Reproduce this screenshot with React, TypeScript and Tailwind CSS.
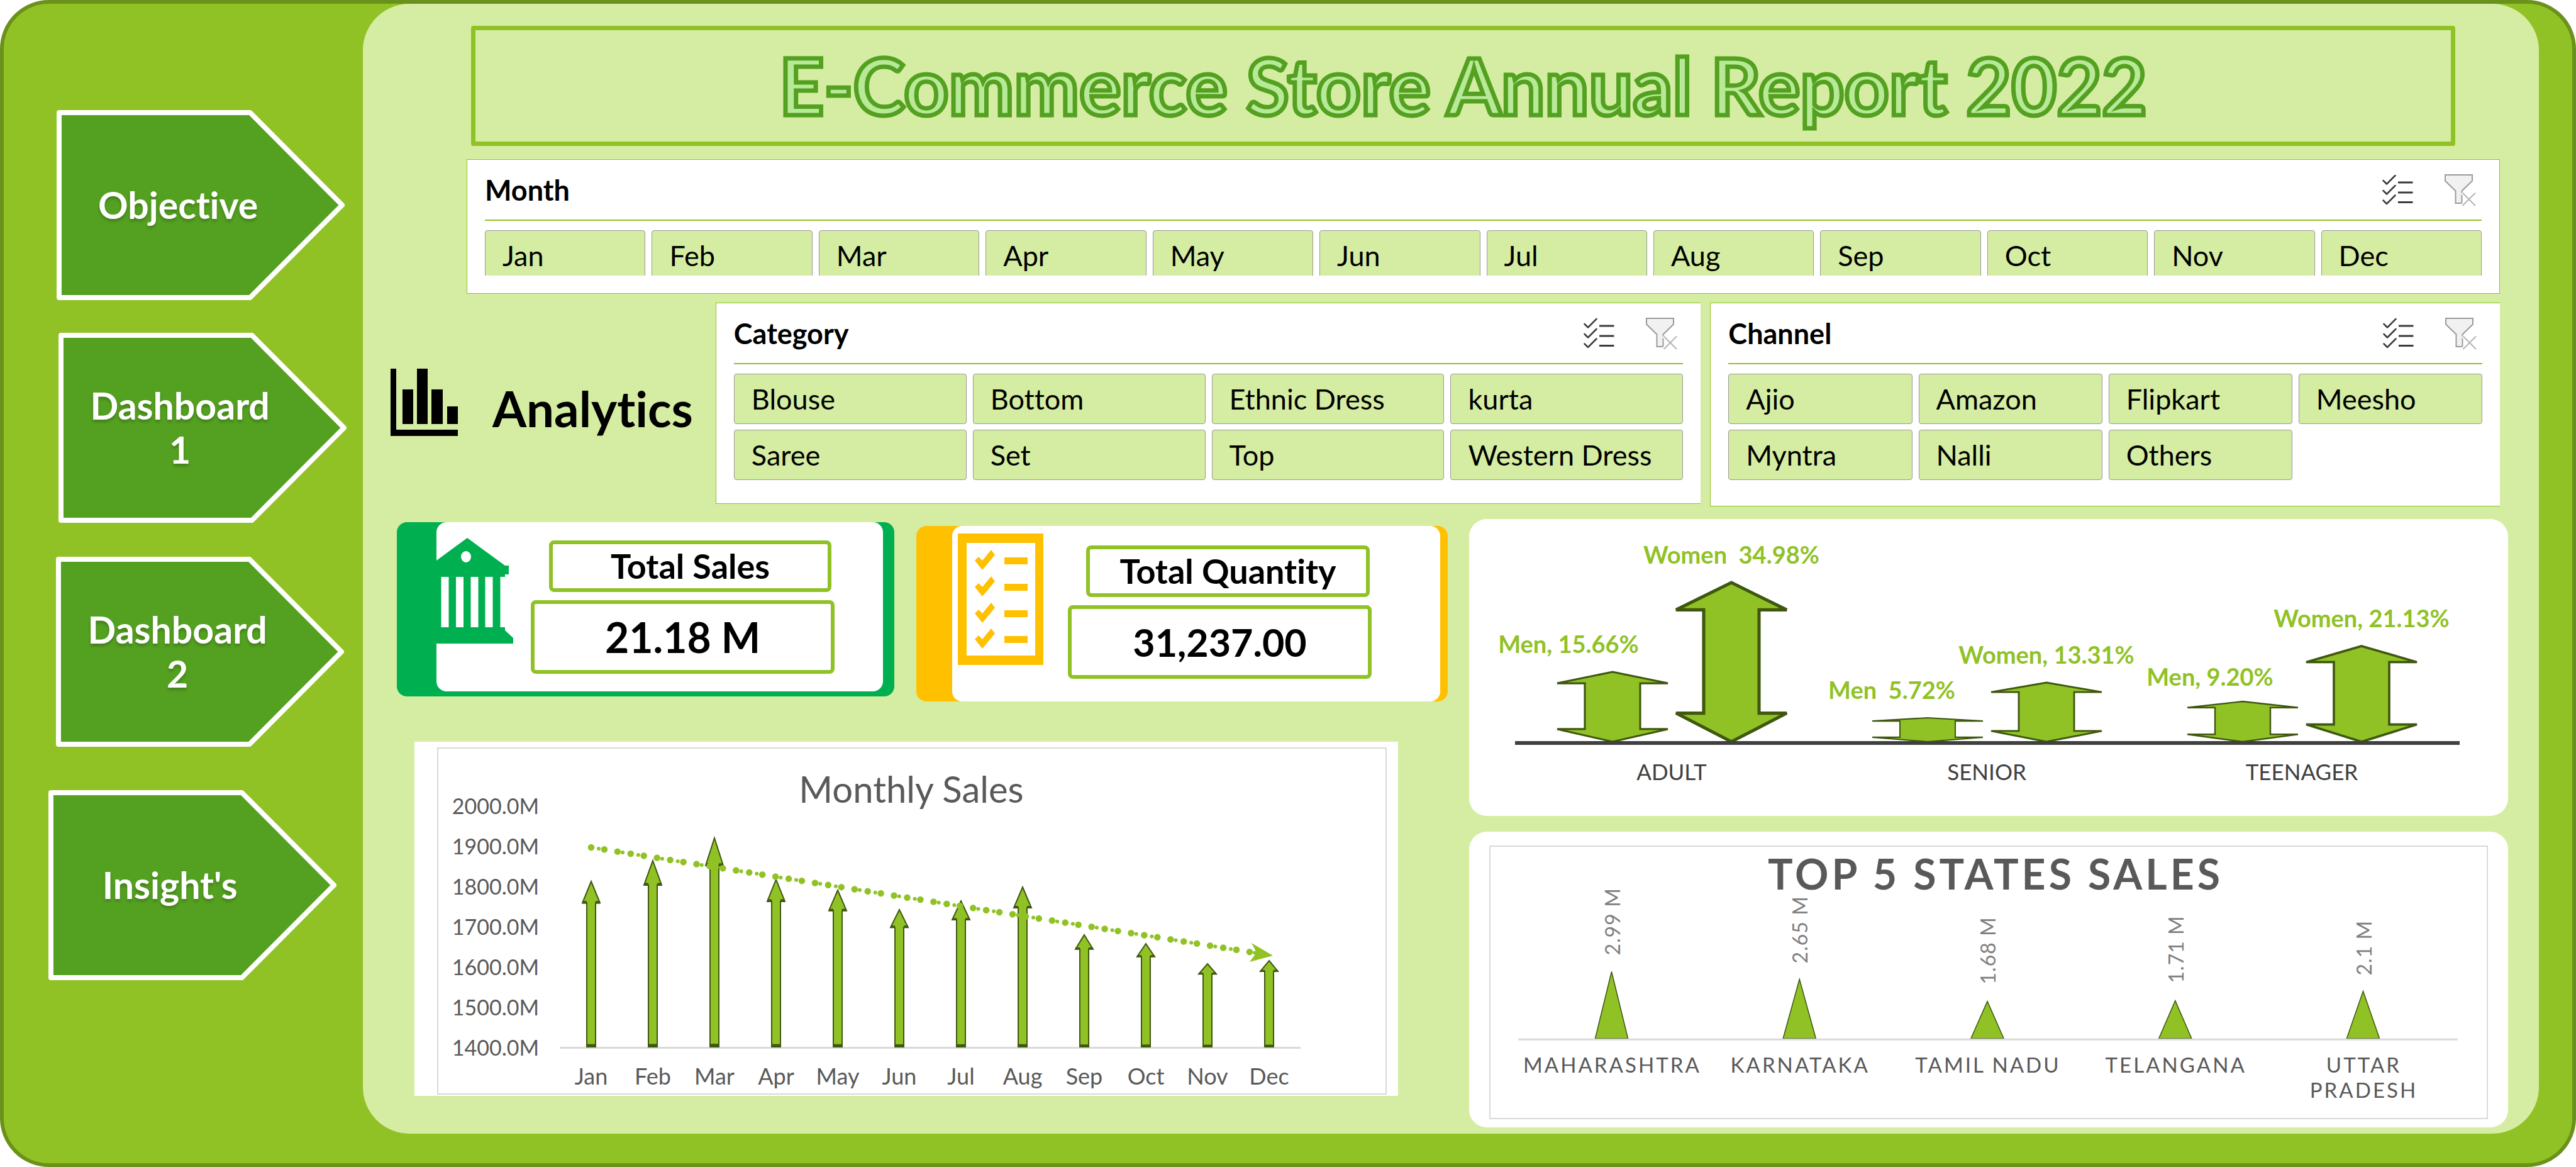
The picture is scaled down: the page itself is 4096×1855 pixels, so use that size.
import React from "react";

const navItems = [
  { label: "Objective", cls: "mt-[169px] ml-[13px]" },
  { label: "Dashboard 1", cls: "mt-[52px] ml-4" },
  { label: "Dashboard 2", cls: "mt-[54px] ml-3" },
  { label: "Insight's", cls: "mt-[69px]" },
];

const months = ["Jan", "Feb", "Mar", "Apr", "May", "Jun", "Jul", "Aug", "Sep", "Oct", "Nov", "Dec"];
const categories = ["Blouse", "Bottom", "Ethnic Dress", "kurta", "Saree", "Set", "Top", "Western Dress"];
const channels = ["Ajio", "Amazon", "Flipkart", "Meesho", "Myntra", "Nalli", "Others"];

function NavArrow({ label, cls }: { label: string; cls: string }) {
  return (
    <a href="#" className={`relative flex h-[302px] w-[92%] items-center ${cls}`}>
      <svg
        className="absolute inset-0 h-full w-full"
        viewBox="0 0 462 303"
        preserveAspectRatio="none"
        aria-hidden="true"
      >
        <path
          d="M4 4H309L456 151.500L309 299H4Z"
          fill="#54a021"
          stroke="#ffffff"
          strokeWidth="8"
          strokeLinejoin="round"
        />
      </svg>
      <span className="relative w-[84%] px-10 text-center text-[59px] leading-[70px] font-bold text-white [text-shadow:0_4px_4px_rgba(0,0,0,0.2)]">
        {label}
      </span>
    </a>
  );
}

function MultiSelectIcon() {
  return (
    <svg className="h-[50px] w-[50px]" viewBox="0 0 50 50" fill="none" aria-hidden="true">
      <g stroke="#3b3b3b" strokeWidth="2.500" strokeLinecap="round" strokeLinejoin="round">
        <path d="M1.500 10L7 15.500L20.500 2" />
        <path d="M1.500 26L7 31.500L20.500 18" />
        <path d="M1.500 41.500L7 47L20.500 33.500" />
      </g>
      <path d="M25 13H48.500M25 29H48.500M25 44.500H48.500" stroke="#3b3b3b" strokeWidth="3" />
    </svg>
  );
}

function ClearFilterIcon() {
  return (
    <svg className="h-[52px] w-[52px]" viewBox="0 0 52 52" fill="none" aria-hidden="true">
      <path
        d="M2 2H45V11.500L28.500 27.500V47H18.500V27.500L2 11.500Z"
        fill="#f1f1f1"
        stroke="#9b9b9b"
        strokeWidth="2"
      />
      <path d="M29 30L50 51M50 30L29 51" stroke="#ffffff" strokeWidth="6" />
      <path d="M29.500 30.500L50 51M50 30.500L29.500 51" stroke="#b5b5b5" strokeWidth="2" />
    </svg>
  );
}

function Slicer({
  title,
  className,
  children,
}: {
  title: string;
  className: string;
  children: React.ReactNode;
}) {
  return (
    <section className={`border border-[#90c226] bg-white px-7 ${className}`}>
      <header className="flex h-[97px] items-center gap-12 border-b-2 border-[#90c226]">
        <h2 className="flex-1 text-[45px] leading-[54px] font-bold text-black">{title}</h2>
        <button type="button" aria-label={`Multi-select ${title}`}>
          <MultiSelectIcon />
        </button>
        <button type="button" aria-label={`Clear ${title} filter`} className="mr-2">
          <ClearFilterIcon />
        </button>
      </header>
      {children}
    </section>
  );
}

function SlicerButton({ label }: { label: string }) {
  return (
    <button
      type="button"
      className="h-20 rounded-[4px] border border-[#999999] bg-[#d5eda2] pl-[27px] text-left text-[45px] leading-[54px] whitespace-nowrap text-black"
    >
      {label}
    </button>
  );
}

function BankIcon() {
  return (
    <svg className="h-[168px] w-[146px]" viewBox="0 0 146 168" aria-hidden="true">
      <path
        fillRule="evenodd"
        fill="#00b050"
        d="M73 0L133 44H139V58H133V62H125.500V142H133V147L146 159V168H0V159L13 147V142H20.500V62H13V58H7V44H13ZM31.500 62V142H43.500V62ZM55 62V142H67V62ZM78.500 62V142H90.500V62ZM101.500 62V142H113.500V62ZM71 21A8 9 0 1 0 71 39A8 9 0 1 0 71 21Z"
      />
    </svg>
  );
}

function ChecklistIcon() {
  return (
    <svg className="h-[209px] w-[136px]" viewBox="0 0 136 209" aria-hidden="true">
      <rect width="136" height="209" fill="#ffc000" />
      <rect x="14" y="15" width="109" height="179" fill="#ffffff" />
      {[26, 68, 110, 151].map((y) => (
        <g key={y} transform={`translate(27 ${y})`} fill="#ffc000">
          <path d="M0 17L6 11L12 17L26 0L32 8L12 32Z" />
          <rect x="47" y="12" width="37" height="11" />
        </g>
      ))}
    </svg>
  );
}

function MonthlySalesChart() {
  const tops = [209, 176, 140, 206, 223, 254, 240, 218, 294, 308, 340, 335];
  const base = 474;
  const ticks = ["2000.0M", "1900.0M", "1800.0M", "1700.0M", "1600.0M", "1500.0M", "1400.0M"];
  const bars = tops.map((top, i) => ({ x: 243 + i * 98, top, h: base - top }));
  return (
    <svg className="block w-full" viewBox="0 0 1506 548" role="img" aria-label="Monthly Sales">
      <text x="752" y="86" textAnchor="middle" className="fill-[#595959] text-[58px]">
        Monthly Sales
      </text>
      {ticks.map((t, i) => (
        <text key={t} x="160" y={104 + i * 64} textAnchor="end" className="fill-[#595959] text-[34px]">
          {t}
        </text>
      ))}
      <path d="M193 475.500H1371" stroke="#d9d9d9" strokeWidth="3" />
      {bars.map(({ x, top, h }, i) => {
        const neck = top + h * 0.137;
        return (
          <g key={months[i]}>
            <path
              d={`M${x} ${top + 2}L${x + 14} ${neck}H${x + 7}V${base}H${x - 7}V${neck}H${x - 14}Z`}
              fill="#90c226"
              stroke="#3f570f"
              strokeWidth="2"
            />
            <path
              d={`M${x - 14} ${neck - 1}H${x - 7}M${x + 7} ${neck - 1}H${x + 14}`}
              stroke="#3f570f"
              strokeWidth={h * 0.012 + 1}
            />
            <path d={`M${x - 8} ${base - 2}H${x + 8}`} stroke="#3f570f" strokeWidth={h * 0.014 + 1} />
            <text x={x} y="534" textAnchor="middle" className="fill-[#595959] text-[36px]">
              {months[i]}
            </text>
          </g>
        );
      })}
      <g stroke="#90c226" strokeLinecap="round" fill="none">
        <path d="M243 157L1308 326" strokeWidth="10.500" strokeDasharray="0 21.200" />
        <path d="M255 159L1308 326" strokeWidth="6" strokeDasharray="0 38.600 0 25" />
      </g>
      <path d="M1293 309L1327 329L1290 339L1301 324Z" fill="#90c226" />
    </svg>
  );
}

function AgeChart() {
  const bars = [
    { x: 228, top: 241, label: "Men, 15.66%", lx: 158, ly: 213 },
    { x: 417, top: 99, label: "Women\u00a0 34.98%", lx: 417, ly: 71 },
    { x: 729, top: 314, label: "Men\u00a0 5.72%", lx: 672, ly: 286 },
    { x: 918, top: 258, label: "Women, 13.31%", lx: 918, ly: 230 },
    { x: 1230, top: 288, label: "Men, 9.20%", lx: 1178, ly: 265 },
    { x: 1419, top: 200, label: "Women, 21.13%", lx: 1419, ly: 172 },
  ];
  const base = 354;
  return (
    <svg className="block w-full" viewBox="0 0 1652 472" role="img" aria-label="Sales share by age group and gender">
      {bars.map(({ x, top, label, lx, ly }) => {
        const h = base - top;
        const n = h * 0.178;
        return (
          <g key={label}>
            <path
              d={`M${x} ${top + 2}L${x + 88} ${top + n}H${x + 44}V${base - n}H${x + 88}L${x} ${base}L${x - 88} ${base - n}H${x - 44}V${top + n}H${x - 88}Z`}
              fill="#90c226"
              stroke="#3f570f"
              strokeWidth={1.5 + h * 0.014}
            />
            <text x={lx} y={ly} textAnchor="middle" className="fill-[#90c226] text-[38px] font-bold whitespace-pre">
              {label}
            </text>
          </g>
        );
      })}
      <path d="M73 356H1575" stroke="#404040" strokeWidth="6" />
      {["ADULT", "SENIOR", "TEENAGER"].map((t, i) => (
        <text key={t} x={322 + i * 501} y="415" textAnchor="middle" className="fill-[#404040] text-[35px]">
          {t}
        </text>
      ))}
    </svg>
  );
}

function StatesChart() {
  const bars = [
    { lines: ["MAHARASHTRA"], top: 198, value: "2.99 M", vy: 172 },
    { lines: ["KARNATAKA"], top: 210, value: "2.65 M", vy: 185 },
    { lines: ["TAMIL NADU"], top: 245, value: "1.68 M", vy: 218 },
    { lines: ["TELANGANA"], top: 244, value: "1.71 M", vy: 216 },
    { lines: ["UTTAR", "PRADESH"], top: 229, value: "2.1 M", vy: 204 },
  ];
  return (
    <svg className="block w-full" viewBox="0 0 1580 430" role="img" aria-label="Top 5 states sales">
      <text x="801" y="68" textAnchor="middle" className="fill-[#595959] text-[66px] font-bold tracking-[5px]">
        TOP 5 STATES SALES
      </text>
      {bars.map(({ lines, top, value, vy }, i) => {
        const x = 192 + i * 298;
        return (
          <g key={value}>
            <path d={`M${x} ${top}L${x + 26} 304H${x - 26}Z`} fill="#90c226" stroke="#3f570f" strokeWidth="1.500" />
            <text
              transform={`translate(${x + 13} ${vy}) rotate(-90)`}
              className="fill-[#7f7f7f] text-[32px] tracking-[1px]"
            >
              {value}
            </text>
            {lines.map((line, j) => (
              <text
                key={line}
                x={x + 1}
                y={358 + j * 40}
                textAnchor="middle"
                className="fill-[#595959] text-[33px] tracking-[3px]"
              >
                {line}
              </text>
            ))}
          </g>
        );
      })}
      <path d="M44 305.500H1534" stroke="#d9d9d9" strokeWidth="3" />
    </svg>
  );
}

export default function App() {
  return (
    <div className="grid min-h-screen grid-cols-[571fr_3460fr_53fr] rounded-[78px] border-[6px] border-[#6a911b] bg-[#90c226] pb-[47px] font-['Lato',sans-serif] [font-variant-ligatures:none]">
      <nav className="flex flex-col pl-[71px]">
        {navItems.map((item) => (
          <NavArrow key={item.label} {...item} />
        ))}
      </nav>

      <main className="min-w-0 rounded-[74px] bg-[#d5eda2] pb-2">
        <div className="mt-[35px] mr-[133px] ml-[172px] flex h-[191px] items-center justify-center rounded-[4px] border-[7px] border-[#90c226] pb-1">
          <h1 className="text-[124px] leading-none font-bold whitespace-nowrap text-[#b7e996] [-webkit-text-stroke:7px_#54a021]">
            E-Commerce Store Annual Report 2022
          </h1>
        </div>

        <div className="mt-[21px] mr-[62px] ml-[165px]">
          <Slicer title="Month" className="pb-7">
            <div className="mt-[15px] grid h-[72px] grid-cols-12 gap-[10px] overflow-hidden">
              {months.map((m) => (
                <SlicerButton key={m} label={m} />
              ))}
            </div>
          </Slicer>
        </div>

        <div className="mt-[14px] mr-[62px] ml-11 grid grid-cols-[517fr_1567fr_15fr_1256fr] items-start">
          <div className="mt-[105px] flex items-start">
            <svg className="h-[107px] w-[107px]" viewBox="0 0 107 107" aria-hidden="true">
              <path d="M0 0H9V97H107V107H0ZM19 33H36V88H19ZM42 0H59V88H42ZM65 33H83V88H65ZM90 60H107V88H90Z" />
            </svg>
            <div className="mt-[17px] ml-[55px] text-[78px] leading-[92px] font-bold text-black">Analytics</div>
          </div>
          <Slicer title="Category" className="border-r-0 pb-[37px]">
            <div className="mt-[15px] grid grid-cols-4 gap-x-[10px] gap-y-[9px]">
              {categories.map((c) => (
                <SlicerButton key={c} label={c} />
              ))}
            </div>
          </Slicer>
          <div />
          <Slicer title="Channel" className="border-r-0 pb-[41px]">
            <div className="mt-[15px] grid grid-cols-4 gap-x-[10px] gap-y-[9px]">
              {channels.map((c) => (
                <SlicerButton key={c} label={c} />
              ))}
            </div>
          </Slicer>
        </div>

        <div className="mt-5 mr-[49px] ml-[54px] grid grid-cols-[1671fr_1652fr] gap-x-[34px]">
          <div className="pt-[5px]">
            <div className="grid grid-cols-[791fr_845fr] items-start gap-[35px]">
              <section className="rounded-2xl bg-[#00b050] pr-[18px] pb-2 pl-[63px]">
                <div className="flex h-[269px] items-start rounded-2xl bg-white pr-[77px]">
                  <div className="mt-[25px] -ml-6 shrink-0">
                    <BankIcon />
                  </div>
                  <div className="mt-[29px] ml-7 flex flex-1 flex-col gap-[13px] text-center font-bold text-black">
                    <h2 className="mr-[5px] ml-[29px] rounded-lg border-[6px] border-[#90c226] text-[54px] leading-[70px]">
                      Total Sales
                    </h2>
                    <p className="rounded-lg border-[6px] border-[#90c226] text-[66px] leading-[105px]">21.18 M</p>
                  </div>
                </div>
              </section>
              <section className="mt-[6px] rounded-2xl bg-[#ffc000] pr-3 pl-[57px]">
                <div className="flex h-[279px] items-start rounded-2xl bg-white pr-[109px]">
                  <div className="mt-3 ml-[9px] shrink-0">
                    <ChecklistIcon />
                  </div>
                  <div className="mt-[31px] ml-[39px] flex flex-1 flex-col gap-[13px] text-center font-bold text-black">
                    <h2 className="mr-[3px] ml-[29px] rounded-lg border-[6px] border-[#90c226] text-[54px] leading-[70px]">
                      Total Quantity
                    </h2>
                    <p className="rounded-lg border-[6px] border-[#90c226] text-[61px] leading-[105px]">31,237.00</p>
                  </div>
                </div>
              </section>
            </div>
            <section className="mt-16 mr-[79px] ml-7 bg-white pt-[9px] pr-[18px] pb-[2px] pl-9">
              <div className="border-2 border-[#d9d9d9]">
                <MonthlySalesChart />
              </div>
            </section>
          </div>

          <div className="flex flex-col gap-[25px]">
            <section className="rounded-[28px] bg-white">
              <AgeChart />
            </section>
            <section className="rounded-[28px] bg-white px-8 pt-[22px] pb-[13px]">
              <div className="border-2 border-[#d9d9d9]">
                <StatesChart />
              </div>
            </section>
          </div>
        </div>
      </main>
    </div>
  );
}
